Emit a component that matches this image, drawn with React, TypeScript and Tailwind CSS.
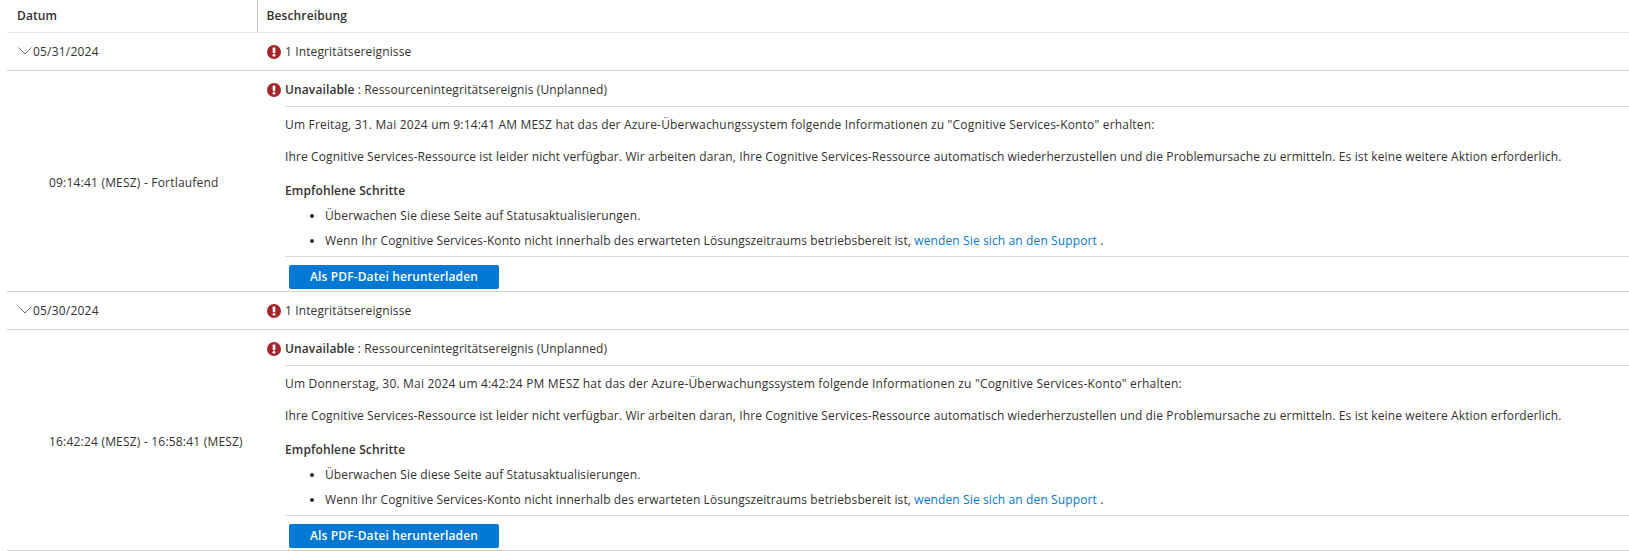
import React from 'react';

function ErrorIcon() {
  return (
    <svg viewBox="0 0 14 14" className="w-[14px] h-[14px] shrink-0">
      <circle cx="7" cy="7" r="7" fill="#a4262c" />
      <rect x="5.7" y="2.6" width="2.6" height="5.6" rx="0.7" fill="#fff" />
      <circle cx="7" cy="10.3" r="1.4" fill="#fff" />
    </svg>
  );
}

function Chevron() {
  return (
    <svg viewBox="0 0 14 8" className="w-[14px] h-[8px] shrink-0 -mt-[2px]" fill="none" stroke="#605e5c" strokeWidth="0.9">
      <path d="M0.5 0.5 L7 7 L13.5 0.5" />
    </svg>
  );
}

type EventProps = {
  date: string;
  time: string;
  intro: string;
};

function EventGroup({ date, time, intro }: EventProps) {
  return (
    <div>
      <div className="flex h-[38px] items-center pt-[1px] border-b border-[#d0d0d0]">
        <div className="w-[250px] flex items-center pl-[11px] gap-[1px]">
          <Chevron />
          <span className="tracking-[0.2px]">{date}</span>
        </div>
        <div className="flex items-center gap-[4px] pl-[10px]">
          <ErrorIcon />
          <span>1 Integritätsereignisse</span>
        </div>
      </div>
      <div className="flex border-b border-[#d0d0d0]">
        <div className="w-[250px] flex items-center pl-[42px] pt-[3px] tracking-[0.2px]">{time}</div>
        <div className="flex-1 pl-[10px]">
          <div className="flex h-[35px] items-center pt-[3px] gap-[4px]">
            <ErrorIcon />
            <span>
              <b className="font-semibold">Unavailable</b> : Ressourcenintegritätsereignis (Unplanned)
            </span>
          </div>
          <div className="ml-[18px] border-t border-[#d9d9d9]">
            <p className="mt-[10px] leading-[16px] tracking-[0.18px]">{intro}</p>
            <p className="mt-[16px] leading-[16px]">
              Ihre Cognitive Services-Ressource ist leider nicht verfügbar. Wir arbeiten daran, Ihre Cognitive Services-Ressource automatisch wiederherzustellen und die Problemursache zu ermitteln. Es ist keine weitere Aktion erforderlich.
            </p>
            <p className="mt-[18px] leading-[16px] font-semibold">Empfohlene Schritte</p>
            <ul className="mt-[9px] list-disc pl-[40px] leading-[16px] flex flex-col gap-[9px]">
              <li>Überwachen Sie diese Seite auf Statusaktualisierungen.</li>
              <li>
                Wenn Ihr Cognitive Services-Konto nicht innerhalb des erwarteten Lösungszeitraums betriebsbereit ist,{' '}
                <a className="text-[#0078d4]">wenden Sie sich an den Support</a> .
              </li>
            </ul>
            <div className="mt-[7px] border-t border-[#d9d9d9] pt-[8px] pb-[2px]">
              <button className="block ml-[4px] w-[210px] h-[24px] bg-[#0078d4] rounded-[2px] text-white font-semibold">
                Als PDF-Datei herunterladen
              </button>
            </div>
          </div>
        </div>
      </div>
    </div>
  );
}

export default function App() {
  return (
    <div className="h-[551px] overflow-hidden bg-white text-[12px] tracking-[0.12px] text-[#323130] font-['Open_Sans','Noto_Sans',sans-serif]">
      <div className="ml-[7px]">
        <div className="flex h-[33px] items-center border-b border-[#e8e8e8] font-semibold">
          <div className="w-[250.5px] h-[32px] flex items-center pl-[10px] border-r border-[#c8c6c4]">Datum</div>
          <div className="pl-[9px]">Beschreibung</div>
        </div>
        <EventGroup
          date="05/31/2024"
          time="09:14:41 (MESZ) - Fortlaufend"
          intro={'Um Freitag, 31. Mai 2024 um 9:14:41 AM MESZ hat das der Azure-Überwachungssystem folgende Informationen zu "Cognitive Services-Konto" erhalten:'}
        />
        <EventGroup
          date="05/30/2024"
          time="16:42:24 (MESZ) - 16:58:41 (MESZ)"
          intro={'Um Donnerstag, 30. Mai 2024 um 4:42:24 PM MESZ hat das der Azure-Überwachungssystem folgende Informationen zu "Cognitive Services-Konto" erhalten:'}
        />
      </div>
    </div>
  );
}
